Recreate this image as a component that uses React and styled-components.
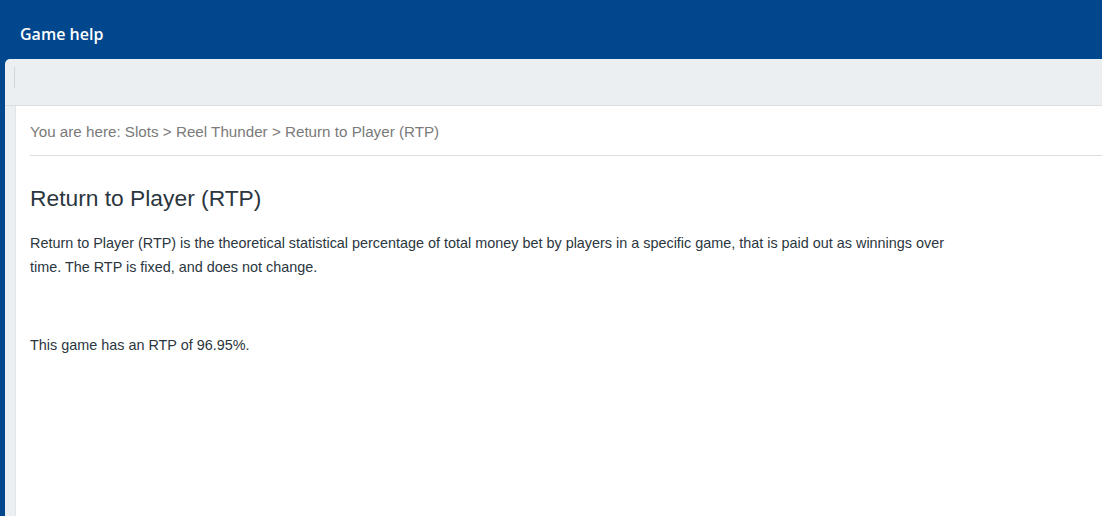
import React from "react";
import styled, { createGlobalStyle } from "styled-components";

const Global = createGlobalStyle`
  html, body { margin: 0; padding: 0; background: #00478d; }
  body { font-family: "Liberation Sans", Arial, sans-serif; overflow: hidden; }
`;

const Page = styled.div`
  width: 1102px;
  height: 516px;
  background: #00478d;
  display: flex;
  flex-direction: column;
  overflow: hidden;
`;

const Header = styled.header`
  height: 59px;
  display: flex;
  align-items: center;
  padding: 0 20px;
  box-sizing: border-box;
`;

const Title = styled.h1`
  margin: 0;
  padding-top: 9px;
  color: #ffffff;
  font-family: "Open Sans", "Noto Sans", sans-serif;
  font-weight: 600;
  font-size: 16px;
`;

const Panel = styled.div`
  flex: 1;
  margin-left: 5px;
  background: #ebeff2;
  border-top-left-radius: 5px;
  display: flex;
  flex-direction: column;
`;

const Toolbar = styled.div`
  height: 47px;
  display: flex;
  align-items: flex-start;
  padding: 8px 0 0 9px;
  box-sizing: border-box;
  border-bottom: 1px solid #dcdfe2;
`;

const Divider = styled.div`
  width: 1px;
  height: 21px;
  background: #d4d8dc;
`;

const Content = styled.main`
  flex: 1;
  margin-left: 10px;
  background: #ffffff;
  border-left: 1px solid #e2e5e8;
  padding: 0 0 0 14px;
`;

const Breadcrumb = styled.div`
  font-size: 15.2px;
  color: #7a7a7a;
  padding: 17px 0 14px;
  border-bottom: 1px solid #dddddd;
  line-height: 18px;
`;

const Heading = styled.h2`
  margin: 27px 0 0;
  font-size: 22.8px;
  font-weight: 400;
  color: #2b3640;
  line-height: 30px;
`;

const Para = styled.p`
  margin: ${(p) => p.$top}px 0 0;
  max-width: 930px;
  font-size: 14.4px;
  line-height: 24px;
  color: #2b3640;
`;

export default function App() {
  return (
    <Page>
      <Global />
      <Header>
        <Title>Game help</Title>
      </Header>
      <Panel>
        <Toolbar>
          <Divider />
        </Toolbar>
        <Content>
          <Breadcrumb>You are here: Slots &gt; Reel Thunder &gt; Return to Player (RTP)</Breadcrumb>
          <Heading>Return to Player (RTP)</Heading>
          <Para $top={18}>
            Return to Player (RTP) is the theoretical statistical percentage of total money bet by players in a specific game, that is paid out as winnings over time. The RTP is fixed, and does not change.
          </Para>
          <Para $top={54}>This game has an RTP of 96.95%.</Para>
        </Content>
      </Panel>
    </Page>
  );
}
